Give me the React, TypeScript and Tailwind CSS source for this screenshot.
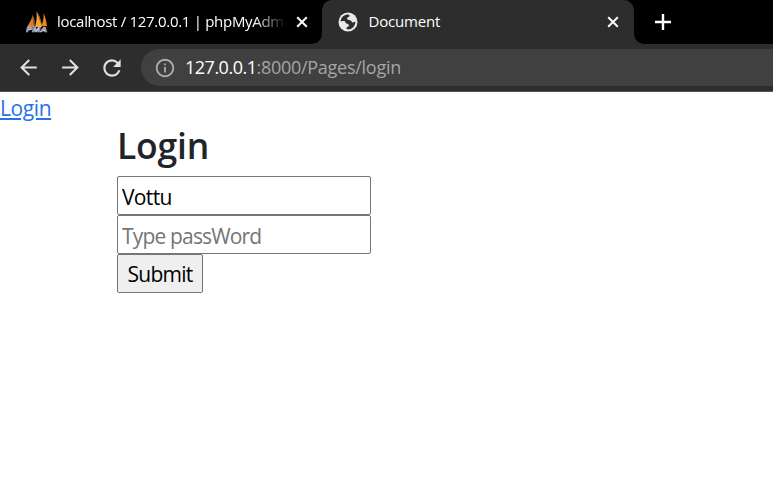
import { MdArrowBack, MdArrowForward, MdInfoOutline, MdRefresh } from "react-icons/md";

const FONT = "font-['Open_Sans','Noto_Sans',sans-serif]";

function SailsIcon() {
  return (
    <svg viewBox="0 0 22 22" className="h-[22px] w-[22px] shrink-0">
      <path d="M6.500 4C6 8 3.500 12 1 16H8.500C9 11 8.500 7 6.500 4Z" fill="#d9822b" />
      <path d="M10.500 0.500C11 6 10.500 11 9 16H16C15.500 10 13.500 4 10.500 0.500Z" fill="#f9a13a" />
      <path d="M17.500 2C18 6 17 11 15.500 15H21C20.500 11 19.500 6 17.500 2Z" fill="#e88718" />
      <path d="M11.500 2L15.500 13M6.500 5L8 14" stroke="#6b4a2b" strokeWidth=".8" />
      <text
        x="0"
        y="20.500"
        textLength="21"
        lengthAdjust="spacingAndGlyphs"
        fontFamily="Liberation Sans, sans-serif"
        fontSize="8"
        fontWeight="700"
        fontStyle="italic"
        fill="#45558c"
        stroke="#c5c8d6"
        strokeWidth=".6"
      >
        PMA
      </text>
    </svg>
  );
}

function GlobeIcon() {
  return (
    <svg viewBox="0 0 20 20" className="h-5 w-5 shrink-0">
      <circle cx="10" cy="10" r="9.500" fill="#e8eaed" />
      <path
        d="M2.500 9.200C3 5.500 6 2.800 9.300 2.500C11 2.500 12 3.200 11.500 4.200C10.800 5.200 9.300 5.300 9 6.300C8.700 7.500 10.500 8 12 8.300C14 8.700 13.300 10.700 15 10.500C16 10.300 16.800 9.500 17.400 9.500C17.600 13 15 16.500 11.500 17.300C9.500 17.600 8.200 17 8.500 15.800C8.800 14.700 10.800 14.800 11 13.500C11.200 12.200 9.500 11.900 8.500 11.500C7.300 11 7.800 9.700 6.700 9.200C5.500 8.700 4.200 9.500 2.500 9.200Z"
        fill="#2d2d2d"
      />
    </svg>
  );
}

function CloseIcon() {
  return (
    <svg viewBox="0 0 12 12" className="h-3 w-3 shrink-0">
      <path d="M1.200 1.200L10.800 10.800M10.800 1.200L1.200 10.800" stroke="#fff" strokeWidth="2" />
    </svg>
  );
}

function TabStrip() {
  return (
    <div className="flex h-[44px] bg-[#2d2d2d] text-[15px] text-white">
      <div className="flex w-[322px] shrink-0 items-center rounded-br-[10px] bg-black pl-[26px]">
        <SailsIcon />
        <span className="ml-[9px] w-[229px] -translate-y-px whitespace-nowrap tracking-[-0.3px] [mask-image:linear-gradient(to_right,black_86%,transparent)]">
          localhost / 127.0.0.1 | phpMyAdm
        </span>
        <span className="ml-[10px]"><CloseIcon /></span>
      </div>
      <div className="w-[312px] shrink-0 bg-black">
        <div className="flex h-full items-center rounded-t-[10px] bg-[#2d2d2d] pr-[15px] pl-[15.500px]">
          <GlobeIcon />
          <span className="ml-[11px] flex-1 -translate-y-px tracking-[-0.2px]">Document</span>
          <CloseIcon />
        </div>
      </div>
      <div className="flex flex-1 items-center rounded-bl-[10px] bg-black pl-[20.500px]">
        <svg viewBox="0 0 16 16" className="h-4 w-4">
          <path d="M8 0V16M0 8H16" stroke="#fff" strokeWidth="2.400" />
        </svg>
      </div>
    </div>
  );
}

function Toolbar() {
  return (
    <div className="flex h-[48px] items-center border-b border-[#555] bg-[#2d2d2d] pl-4 text-[#e0e0e0]">
      <MdArrowBack size={25} />
      <MdArrowForward size={25} className="ml-[17px]" />
      <MdRefresh size={26} className="ml-4" />
      <div className="ml-4 flex h-[37px] flex-1 items-center rounded-l-full bg-[#404040] pl-[13px]">
        <MdInfoOutline size={22} className="text-[#aaacaf]" />
        <span className="ml-[9px] text-[18px] tracking-[-0.27px] whitespace-nowrap text-[#a5a5a5]">
          <span className="tracking-[-0.5px] text-white">127.0.0.1</span>:8000/Pages/login
        </span>
      </div>
    </div>
  );
}

export default function App() {
  return (
    <div className={`h-[488px] w-[773px] overflow-hidden bg-white ${FONT}`}>
      <TabStrip />
      <Toolbar />
      <main className="text-[21px] tracking-[-0.5px]">
        <a href="#" className="block h-[32px] w-fit leading-[32px] tracking-[-0.4px] text-[#2972ea] underline decoration-2 underline-offset-[2px]">
          Login
        </a>
        <form className="ml-[117px] flex flex-col items-start">
          <h1 className="mb-[8px] h-[44px] text-[35.500px] leading-[43px] font-semibold tracking-[-0.2px] text-[#212529]">Login</h1>
          <input
            defaultValue="Vottu"
            className="h-[39px] w-[254px] rounded-[2px] border border-[#767676] px-1 pt-[2px] tracking-[-0.65px] text-black"
          />
          <input
            placeholder="Type passWord"
            className="h-[39px] w-[254px] rounded-[2px] border border-[#767676] px-1 pt-[2px] tracking-[-0.83px] placeholder:text-[#757575]"
          />
          <button type="button" className="h-[39px] w-[86px] rounded-[2px] border border-[#767676] bg-[#efefef] pt-[2px] tracking-[-0.75px] text-black">
            Submit
          </button>
        </form>
      </main>
    </div>
  );
}
